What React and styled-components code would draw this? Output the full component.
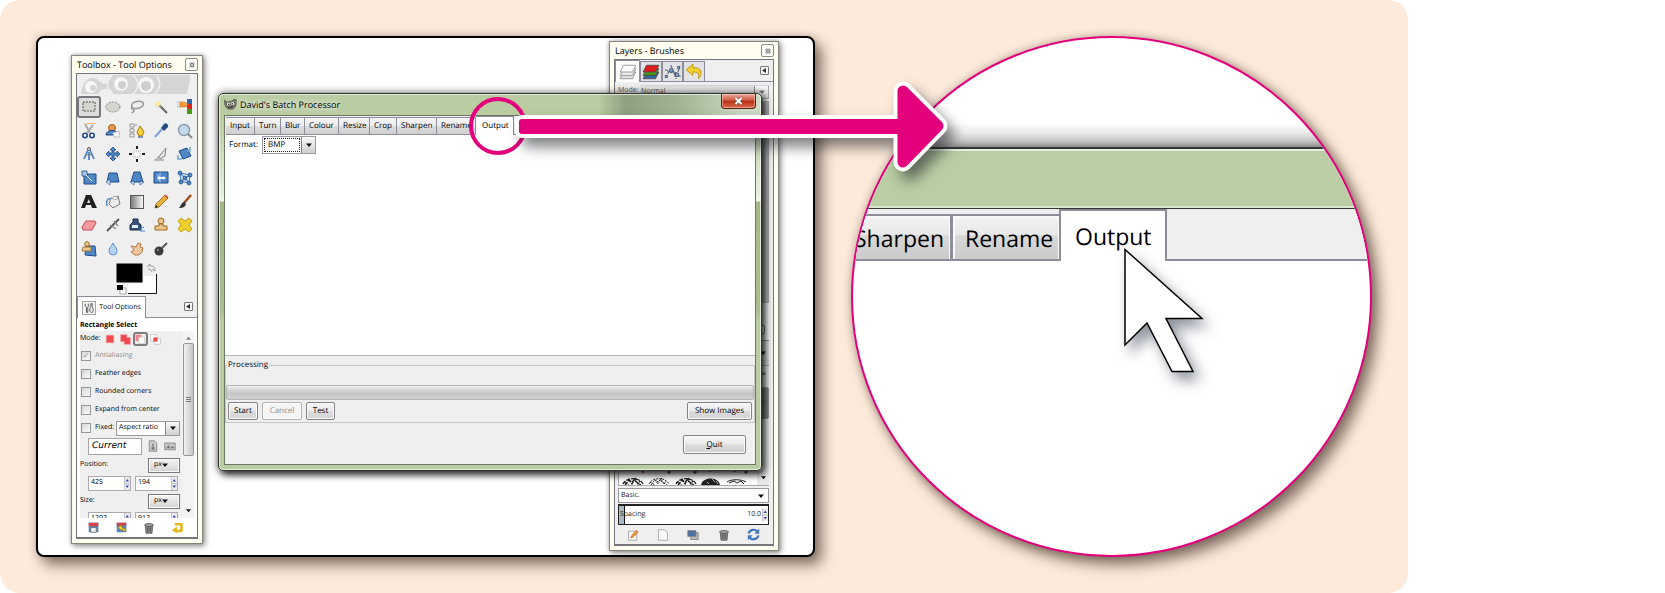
import React from "react";
import styled, { createGlobalStyle } from "styled-components";

const GlobalStyle = createGlobalStyle`
  *, *::before, *::after { box-sizing: border-box; }
  body {
    margin: 0;
    background: #fff;
    font-family: "Open Sans", "Noto Sans", sans-serif;
    font-size: 8px;
    line-height: 12px;
    color: #000;
    text-rendering: geometricPrecision;
  }
  button, input, select { font: inherit; color: inherit; margin: 0; padding: 0; border-radius: 0; text-rendering: inherit; }
  svg { display: block; flex: none; }
`;

/* ---------- page ---------- */

const Card = styled.main`
  position: relative;
  display: flex;
  gap: 36px;
  width: 100%;
  max-width: 1408px;
  padding: 36px;
  border-radius: 20px;
  background: #fdeada;
  overflow: hidden;
`;

const Desktop = styled.section`
  position: relative;
  flex: 1;
  min-width: 0;
  border: 2px solid #000;
  border-radius: 8px;
  background: #fff;
  box-shadow: 7px 8px 14px rgba(60, 42, 32, 0.6), 0 0 8px rgba(60, 42, 32, 0.25);
`;

/* ---------- dock windows ---------- */

const DockWindow = styled.section`
  position: absolute;
  display: flex;
  flex-direction: column;
  left: ${(p) => p.$left}px;
  top: ${(p) => p.$top}px;
  width: ${(p) => p.$width}px;
  height: ${(p) => p.$height}px;
  padding: 0 4px 4px;
  border: 1px solid #85857c;
  background: #fffdf0;
  box-shadow: 2px 2px 6px rgba(0, 0, 0, 0.4), 0 0 4px rgba(0, 0, 0, 0.25);
`;

const DockTitle = styled.header`
  display: flex;
  align-items: center;
  justify-content: space-between;
  flex: none;
  height: 17px;
  padding-left: 1px;
  h2 { margin: 0; font-size: 9px; font-weight: 400; white-space: nowrap; }
`;

const DockClose = styled.button`
  display: grid;
  place-items: center;
  width: 13px;
  height: 13px;
  border: 1px solid #8a8a8a;
  border-radius: 2px;
  background: #fffef8;
`;

const DockBody = styled.div`
  display: flex;
  flex-direction: column;
  flex: 1;
  min-height: 0;
  border: 1px solid #75757f;
  border-bottom-width: 2px;
  background: #efefef;
`;

const ToolGrid = styled.div`
  display: grid;
  flex: none;
  grid-template-columns: repeat(5, 1fr);
  grid-template-rows: repeat(7, 1fr);
  height: 166px;
`;

const ToolButton = styled.button`
  display: grid;
  place-items: center;
  margin: 1px 0;
  border: ${(p) => (p.$active ? "2px solid #77777b" : "0")};
  border-radius: 3px;
  background: ${(p) => (p.$active ? "#dedede" : "transparent")};
`;

const ColourArea = styled.div`
  display: flex;
  justify-content: center;
  flex: none;
  height: 35px;
  padding-top: 2px;
`;

const TabStrip = styled.div`
  position: relative;
  display: flex;
  flex: none;
  align-items: stretch;
  height: 22px;
  border-bottom: 1px solid #8d8d9c;
`;

const DockTab = styled.button`
  display: flex;
  align-items: center;
  justify-content: center;
  gap: 3px;
  width: ${(p) => p.$width}px;
  border: 1px solid #8d8d9c;
  border-width: 1px 1px 0 1px;
  background: ${(p) => (p.$active ? "#fff" : "#e3e3e6")};
  margin-top: ${(p) => (p.$active ? 0 : 1)}px;
  margin-bottom: ${(p) => (p.$active ? -1 : 0)}px;
  font-size: 7px;
  white-space: nowrap;
`;

const TabIconFrame = styled.span`
  display: grid;
  place-items: center;
  width: 14px;
  height: 14px;
  border: 1px solid #a5a5a5;
  background: #f3f3f3;
`;

const MenuButton = styled.button`
  display: grid;
  place-items: center;
  align-self: center;
  width: 9px;
  height: 9px;
  margin: 0 4px 0 auto;
  border: 1px solid #777;
  border-radius: 1px;
  background: #f6f6f6;
`;

const OptionsPane = styled.div`
  display: flex;
  flex-direction: column;
  flex: 1;
  min-height: 0;
  padding: 3px 3px 0;
  background: #fff;
  font-size: 7px;
`;

const OptionsHeading = styled.h3`
  flex: none;
  margin: 0;
  font-size: 7px;
  font-weight: 700;
  line-height: 10px;
  color: #000;
  white-space: nowrap;
`;

const ScrollBox = styled.div`
  display: flex;
  flex: none;
  height: 187px;
  overflow: hidden;
  background: #efefef;
`;

const OptionList = styled.div`
  flex: 1;
  min-width: 0;
  padding-right: 2px;
`;

const Row = styled.div`
  display: flex;
  align-items: center;
  gap: ${(p) => p.$gap ?? 4}px;
  height: ${(p) => p.$height ?? 18}px;
  padding-left: ${(p) => p.$left ?? 0}px;
  white-space: nowrap;
`;

const CheckLabel = styled.label`
  display: flex;
  align-items: center;
  gap: 4px;
  color: ${(p) => (p.$muted ? "#8c8c8c" : "inherit")};
`;

const CheckBox = styled.input.attrs({ type: "checkbox" })`
  display: grid;
  place-items: center;
  appearance: none;
  width: 10px;
  height: 10px;
  border: 1px solid #94989c;
  background: linear-gradient(135deg, #d4d6d9, #fbfbfb);
  &:checked::before {
    content: "✓";
    font: 8px/8px "DejaVu Sans", sans-serif;
    color: #999;
  }
`;

const ModeButton = styled.button`
  display: grid;
  place-items: center;
  width: 15px;
  height: 14px;
  border: ${(p) => (p.$active ? "2px solid #7b7b80" : "0")};
  border-radius: 3px;
  background: ${(p) => (p.$active ? "#ededed" : "transparent")};
`;

const Combo = styled.span`
  display: flex;
  width: ${(p) => p.$width}px;
  height: ${(p) => p.$height}px;
  border: 1px solid #9a9a9e;
  background: #fff;
`;

const Select = styled.select`
  appearance: none;
  flex: 1;
  min-width: 0;
  padding: 0 0 0 ${(p) => p.$pad ?? 2}px;
  border: ${(p) => (p.$dotted ? "1px dotted #222" : "0")};
  margin: ${(p) => (p.$dotted ? "1px" : "0")};
  background: transparent;
  outline: 0;
`;

const ComboArrow = styled.span`
  display: grid;
  place-items: center;
  width: 14px;
  border-left: 1px solid #85858a;
  background: linear-gradient(#fafafa, #cfcfcf);
`;

const UnitSelect = styled.span`
  display: flex;
  align-items: center;
  width: 32px;
  height: 15px;
  margin-left: auto;
  padding-right: 11px;
  border: 1px solid #77777c;
  background: linear-gradient(#f4f4f4, #d2d2d2);
  box-shadow: inset 0 0 0 1px #fafafa;
  select { text-align: right; }
`;

const RatioInput = styled.input`
  width: 54px;
  height: 17px;
  padding: 0 3px;
  border: 1px solid #a3a3a8;
  background: #fff;
  font: italic 9px/12px "DejaVu Sans", sans-serif;
`;

const IconButton = styled.button`
  display: grid;
  place-items: center;
  width: ${(p) => p.$size ?? 14}px;
  height: ${(p) => p.$size ?? 14}px;
  border: 0;
  background: transparent;
`;

const SpinBox = styled.span`
  display: flex;
  width: 43px;
  height: 15px;
  border: 1px solid #ababb0;
  background: #fff;
  input {
    flex: 1;
    min-width: 0;
    padding: 0 0 0 2px;
    border: 0;
    background: transparent;
  }
`;

const Scroller = styled.div`
  display: flex;
  flex-direction: column;
  align-items: center;
  justify-content: space-between;
  flex: none;
  width: 12px;
  padding: ${(p) => p.$pad ?? "5px 0"};
  background: ${(p) => p.$bg ?? "#f3f3f3"};
`;

const Thumb = styled.div`
  display: grid;
  place-items: center;
  width: 11px;
  height: ${(p) => p.$height}px;
  margin: ${(p) => p.$margin};
  border: 1px solid #96969b;
  border-radius: 2px;
  background: ${(p) => p.$bg ?? "linear-gradient(90deg, #f2f2f2, #c4c4c7)"};
`;

const IconBar = styled.div`
  display: flex;
  align-items: center;
  justify-content: space-around;
  flex: 1;
  padding-right: ${(p) => p.$right ?? 0}px;
`;

/* ---------- layers window ---------- */

const LayersPane = styled.div`
  display: flex;
  flex-direction: column;
  flex: 1;
  min-height: 0;
  padding: 3px 4px 0 3px;
  font-size: 7px;
  color: #555;
`;

const PaneRow = styled.div`
  display: flex;
  justify-content: space-between;
  flex: none;
  height: ${(p) => p.$height}px;
  margin-bottom: ${(p) => p.$below ?? 0}px;
  border: ${(p) => (p.$framed ? "1px solid #a9a9ad" : "0")};
  background: ${(p) => p.$bg ?? "transparent"};
`;

const ModeCombo = styled(Combo)`
  border-color: #d8d8da #a9a9ad #a9a9ad #e6e6e6;
  background: #e6e6e6;
`;

const BrushShelf = styled.div`
  align-self: flex-end;
`;

const FullCombo = styled(Combo)`
  flex: none;
  width: 100%;
  color: #222;
  padding-right: 4px;
  align-items: center;
`;

const Spacing = styled.label`
  display: flex;
  align-items: center;
  flex: none;
  height: 21px;
  margin-top: 1px;
  border: 1px solid #222;
  border-top-width: 2px;
  background: linear-gradient(90deg, #a9b8c2 5px, #111 5px, #111 6px, #fff 6px);
  color: #222;
  padding-left: 1px;
  input { flex: 1; min-width: 0; border: 0; background: transparent; text-align: right; padding-right: 1px; }
`;

/* ---------- batch processor ---------- */

const BatchWindow = styled.section`
  position: absolute;
  display: flex;
  flex-direction: column;
  left: 180px;
  top: 55px;
  width: 544px;
  height: 378px;
  padding: 0 5px 5px;
  border: 1px solid #2f332c;
  border-radius: 5px;
  background:
    linear-gradient(90deg, transparent 70%, rgba(105, 125, 105, 0.55) 75%, rgba(130, 150, 130, 0.45) 85%, rgba(220, 228, 220, 0.6) 97%) top / 100% 21px no-repeat,
    linear-gradient(#b9cca2 0 24px, #eaf2e4 104px, #f2f7ee 107px, #a3b98a 108px, #a9be90 215px, #b9cca2 228px);
  box-shadow: inset 0 0 0 1px rgba(244, 250, 238, 0.75), 3px 4px 7px rgba(0, 0, 0, 0.75), 0 0 9px rgba(0, 0, 0, 0.55);
`;

const BatchTitle = styled.header`
  display: flex;
  align-items: center;
  flex: none;
  gap: 3px;
  height: 21px;
  h1 {
    margin: 0;
    font-size: 9px;
    font-weight: 400;
    white-space: nowrap;
    text-shadow: 0 0 5px #fff, 0 0 8px #fff;
  }
`;

const BatchClose = styled.button`
  display: grid;
  place-items: center;
  align-self: flex-start;
  width: 35px;
  height: 15px;
  margin-left: auto;
  border: 1px solid #5a2018;
  border-top: 0;
  border-radius: 0 0 4px 4px;
  background: linear-gradient(#e9a99b, #cf5a42 45%, #b92f14 50%, #d9694a);
  box-shadow: inset 0 0 0 1px rgba(255, 220, 210, 0.5);
`;

const Client = styled.div`
  display: flex;
  flex-direction: column;
  flex: 1;
  min-height: 0;
  border: 1px solid #6e7765;
  background: #efefef;
`;

const BatchTabs = styled.div`
  display: flex;
  align-items: flex-end;
  flex: none;
  height: 19px;
  padding-left: 1px;
  &::after { content: ""; flex: 1; border-bottom: 1px solid #8d8d9c; }
`;

const BatchTab = styled.button`
  flex: none;
  width: ${(p) => p.$width}px;
  height: ${(p) => (p.$active ? 19 : 18)}px;
  padding: 0 0 0 ${(p) => (p.$active ? 6 : 4)}px;
  overflow: hidden;
  text-align: left;
  white-space: nowrap;
  border: solid #8d8d9c;
  border-width: ${(p) => (p.$active ? "1px 1px 0 0" : "1px 1px 1px 0")};
  background: ${(p) => (p.$active ? "#fff" : "linear-gradient(#f5f5f5, #ececec 50%, #dcdcdc 52%, #d0d0d0)")};
`;

const BatchPage = styled.div`
  flex: 1;
  padding: 1px 4px;
  border-bottom: 1px solid #b4b4b4;
  background: #fff;
`;

const Processing = styled.fieldset`
  flex: none;
  min-width: 0;
  height: 64px;
  margin: 3px 0 0;
  padding: 14px 0 2px;
  border: 1px solid #c6c6c6;
  legend { padding: 0 1px; margin-left: 1px; }
`;

const ProgressTrack = styled.div`
  height: 15px;
  border: 1px solid #b5b5b5;
  border-radius: 2px;
  background: linear-gradient(#ededed, #cfcfcf 40%, #c6c6c6 60%, #d2d2d2);
`;

const ButtonRow = styled.div`
  display: flex;
  gap: 4px;
  padding: 2px 2px 0;
`;

const PushButton = styled.button`
  width: ${(p) => p.$width}px;
  height: ${(p) => p.$height ?? 18}px;
  margin-left: ${(p) => (p.$end ? "auto" : 0)};
  border: 1px solid #83838a;
  border-radius: 2px;
  background: linear-gradient(#f6f6f6, #ebebeb 48%, #dcdcdc 52%, #d2d2d2);
  box-shadow: inset 0 0 0 1px #fafafa;
  white-space: nowrap;
  &:disabled { color: #8b8b8b; border-color: #b5b5b8; background: #f5f5f5; }
`;

const BatchFooter = styled.footer`
  flex: none;
  display: flex;
  height: 41px;
  padding: 12px 9px 0 0;
`;

/* ---------- magnified view and annotations ---------- */

const Lens = styled.section`
  position: relative;
  display: flex;
  flex-direction: column;
  flex: none;
  width: 521px;
  height: 521px;
  border: 2px solid #e4007c;
  border-radius: 50%;
  background: #fff;
  box-shadow: 7px 8px 14px rgba(60, 42, 32, 0.6), 0 0 8px rgba(60, 42, 32, 0.3);
  overflow: hidden;
`;

const LensSky = styled.div`
  flex: none;
  height: 109px;
  background: linear-gradient(transparent, rgba(0, 0, 0, 0.08) 40%, rgba(0, 0, 0, 0.22) 75%, rgba(0, 0, 0, 0.45)) bottom / 100% 24px no-repeat;
`;

const LensTitle = styled.div`
  flex: none;
  height: 62px;
  border: solid #33362f;
  border-width: 2px 0 1px;
  background: #bacda4;
  box-shadow: inset 0 2px 0 #e6efdd, inset 0 -2px 0 #dbe6d0;
`;

const LensTabs = styled.div`
  display: flex;
  align-items: flex-end;
  flex: none;
  height: 52px;
  background: #efefef;
  &::after { content: ""; flex: 1; border-bottom: 2px solid #8b8d99; }
`;

const LensTab = styled.button`
  display: flex;
  align-items: center;
  flex: none;
  width: ${(p) => p.$width}px;
  height: ${(p) => (p.$active ? 52 : 47)}px;
  padding: 0 0 0 ${(p) => p.$pad}px;
  overflow: hidden;
  white-space: nowrap;
  font-size: 23px;
  line-height: 32px;
  border: solid #8b8d99;
  border-width: ${(p) => (p.$active ? "2px 2px 0 2px" : p.$divider ? "2px 3px 2px 0" : "2px 0 2px 0")};
  background: ${(p) => (p.$active ? "#fff" : "linear-gradient(#f3f3f3, #e8e8e8 44%, #d8d8d8 46%, #cbcbcb)")};
  box-shadow: ${(p) => (p.$active ? "none" : "inset 2px 2px 0 #fafafa, inset -1px 0 0 #fafafa")};
`;

const Pointer = styled.svg`
  position: absolute;
  left: 270px;
  top: 209px;
  filter: drop-shadow(6px 8px 7px rgba(30, 40, 60, 0.5));
`;

const Ring = styled.div`
  position: absolute;
  left: 469px;
  top: 97px;
  width: 58px;
  height: 58px;
  border: 4px solid #e4007c;
  border-radius: 50%;
`;

const Arrow = styled.svg`
  position: absolute;
  left: 510px;
  top: 75px;
  filter: drop-shadow(7px 9px 7px rgba(20, 25, 30, 0.55));
`;

/* ---------- drawings ---------- */

const B = "#4f86c6";
const D = "#204a87";

const toolIcons = {
  rectangle: <rect x="2" y="3" width="12" height="9" fill="#d3d7cf" stroke="#555" strokeDasharray="2 1" />,
  ellipse: <ellipse cx="8" cy="8" rx="7" ry="5" fill="#d3d7cf" stroke="#888" strokeDasharray="2 1" />,
  lasso: <><ellipse cx="8.500" cy="6" rx="6" ry="3.500" fill="none" stroke="#999" strokeWidth="1.600" transform="rotate(-12 8 6)" /><path d="M3 8c-2 3 3 2 2 4s-2 1-2 2" fill="none" stroke="#888" strokeWidth="1.200" /></>,
  wand: <><path d="M6 6l8 8" stroke="#666" strokeWidth="2" /><path d="M5 1v8M1 5h8M2 2l6 6M8 2L2 8" stroke="#f4e78a" strokeWidth=".7" /><circle cx="5" cy="5" r="2" fill="#f8ee9a" /></>,
  byColor: <><rect x="10" y="0" width="5" height="5" fill="#3465a4" /><rect x="10" y="5" width="5" height="5" fill="#d22" /><rect x="10" y="10" width="5" height="5" fill="#4a9a18" /><path d="M0 3h3v5H0z" fill="#eee" stroke="#999" strokeWidth=".5" /><path d="M3 3h4l4 2-2 3H3z" fill="#f39a3b" stroke="#c60" strokeWidth=".5" /></>,
  scissors: <><path d="M4 1l5 9M12 2L6 10" stroke="#aaa" strokeWidth="2" /><path d="M5 1c3-1 6 0 10-1" stroke="#f0b060" fill="none" /><circle cx="4" cy="12.500" r="2.200" fill="#fff" stroke={D} strokeWidth="1.600" /><circle cx="11" cy="12.500" r="2.200" fill="#fff" stroke={D} strokeWidth="1.600" /></>,
  foreground: <><circle cx="7" cy="5" r="3.5" fill="#e8964a" stroke="#a55a12" /><path d="M1 12c0-6 12-6 12 0z" fill={B} stroke={D} /><path d="M8 10l6-2 1 6H9z" fill="#fff" stroke="#bbb" /></>,
  paths: <><path d="M3 2v12M3 2h5" stroke="#888" strokeDasharray="2 1" /><g fill="#f4f4f4" stroke="#777" strokeWidth=".7"><rect x="1" y="1" width="4" height="3" /><rect x="1" y="6" width="4" height="3" /><rect x="1" y="11" width="4" height="3" /></g><path d="M11 3l4 6-2 4h-3L8 9z" fill="#f5d442" stroke="#a87c08" /><path d="M9 13h5v2H9z" fill="#7d92b5" /></>,
  picker: <><path d="M2 14l7-8" stroke="#7ba4d8" strokeWidth="2" /><path d="M8 5l3 3 4-4c1-2-2-5-4-3z" fill="#234a80" /></>,
  zoom: <><circle cx="7" cy="7" r="5.5" fill="#c3daf2" stroke="#8d9aa8" strokeWidth="1.4" /><path d="M11 11l4 4" stroke="#888" strokeWidth="2.2" /></>,
  measure: <><circle cx="8" cy="3" r="1.6" fill="#ccc" stroke="#666" /><path d="M7 4L3 13M9 4l4 9M8 6v8" stroke={B} strokeWidth="1.800" /><path d="M4 10c2-2 6-2 8 0" fill="none" stroke="#777" /></>,
  move: <path d="M8 1l3 3H9v3h3V5l3 3-3 3V9H9v3h2l-3 3-3-3h2V9H4v2L1 8l3-3v2h3V4H5z" fill={B} stroke={D} strokeWidth=".8" />,
  align: <><rect x="5" y="5" width="6" height="6" fill="#fff" stroke="#aaa" strokeDasharray="1 1" /><path d="M8 0v3M8 13v3M0 8h3M13 8h3" stroke="#222" strokeWidth="2" /></>,
  crop: <path d="M3 14L13 2l-1 8-5 3-2-3M1 14h10" fill="#ddd" stroke="#888" />,
  rotate: <><path d="M2 5l8-3 4 8-8 3z" fill={B} stroke={D} /><path d="M13 1v4h-3M1 9v4h4" fill="none" stroke="#78a4da" strokeWidth="1.6" /></>,
  scale: <><path d="M3 4h12v10H3z" fill={B} stroke={D} /><path d="M1 1h5v5H1z" fill="#a9c7ea" stroke={D} strokeWidth=".8" /><path d="M5 5l6 6" stroke="#fff" /></>,
  shear: <><path d="M4 3h8l2 9H2z" fill={B} stroke={D} /><path d="M1 12l4-3v6z" fill="#cfe0f5" stroke={D} strokeWidth=".6" /></>,
  perspective: <><path d="M5 2h6l3 10H2z" fill={B} stroke={D} /><path d="M1 12l4-1v4zM15 12l-4-1v4z" fill="#cfe0f5" stroke={D} strokeWidth=".6" /></>,
  flip: <><path d="M1 2h14v11H1z" fill={B} stroke={D} /><path d="M8 2L4 5v5l4 3z" fill="#7aa8de" /><path d="M4 8l3-2v1h3V6l3 2-3 2V9H7v1z" fill="#fff" /></>,
  cage: <><path d="M3 3l10 2-1 8-8-2zM3 3l5 5 4 5M4 12l4-4 5-3" fill="none" stroke={B} strokeWidth="1.2" />{[[3, 3], [13, 5], [8, 8], [4, 12], [12, 13]].map(([x, y]) => <circle key={x} cx={x} cy={y} r="2" fill={B} stroke={D} strokeWidth=".7" />)}</>,
  text: <path d="M0 14L5 1h5l6 13h-5l-1-3H5l-1 3zM6 9h3L8 5z" fill="#1d1f20" />,
  bucket: <><path d="M6 4l7-2 2 8-7 4-4-4z" fill="#ededed" stroke="#777" /><path d="M6 5C2 4 1 7 2 12" stroke="#5b8ac6" strokeWidth="1.600" /><ellipse cx="10" cy="4" rx="3" ry="1.4" fill="#fff" stroke="#888" strokeWidth=".6" /></>,
  gradient: <rect x="1.500" y="1.500" width="13" height="13" fill="url(#blend)" stroke="#555" />,
  pencil: <><path d="M2 14l1-4 9-9 3 3-9 9z" fill="#e8b23a" stroke="#8a5a0a" strokeWidth=".8" /><path d="M2 14l1-3 2 2z" fill="#222" /><path d="M12 1l3 3" stroke="#c44" strokeWidth="1.6" /></>,
  brush: <><path d="M7 9L14 1" stroke="#9a4c1c" strokeWidth="2.4" /><path d="M7 8l2 2c-1 4-5 4-7 4 2-2 2-5 5-6z" fill="#333" /></>,
  eraser: <path d="M1 10L5 4h9l1 2-4 7H2z" fill="#f29a9d" stroke="#c74a50" />,
  airbrush: <><path d="M2 14L14 2" stroke="#555" strokeWidth="1.8" /><path d="M5 8l6 4M9 4l4 5" stroke="#888" strokeWidth="1.4" /></>,
  ink: <><path d="M4 2h5v3l3 3v5H1V8l3-3z" fill="#38557d" stroke="#1d2c44" /><rect x="3" y="8" width="6" height="3" fill="#e2e8f0" /><path d="M11 12l4-2M11 14h5" stroke={B} /></>,
  clone: <><circle cx="8" cy="4" r="3" fill="#edc58c" stroke="#9a6a24" /><path d="M6 7h4v2h4v4H2V9h4z" fill="#edc58c" stroke="#9a6a24" /></>,
  heal: <path d="M4 1l4 3 4-3 3 3-3 4 3 4-3 3-4-3-4 3-3-3 3-4-3-4z" fill="#edcf2c" stroke="#c4a414" />,
  perspClone: <><path d="M5 5h9l1 10-11-1z" fill={B} stroke={D} /><circle cx="6" cy="3" r="2.300" fill="#edc58c" stroke="#9a6a24" /><path d="M2 6h8v4H1z" fill="#edc58c" stroke="#9a6a24" strokeWidth=".8" /></>,
  blur: <path d="M8 2c2 4 4 5 4 8a4 4 0 0 1-8 0c0-3 2-4 4-8z" fill="#b5d4f2" stroke="#5a8cc4" />,
  smudge: <path d="M2 5l5 1 2-4 3 1-1 3 3 1-1 4-3 3H6L2 11l3-2z" fill="#f1c69c" stroke="#b57a46" />,
  dodge: <><circle cx="6" cy="10" r="4.500" fill="#3a3d40" /><path d="M9 7l5-5" stroke="#555" strokeWidth="2" /><circle cx="5" cy="9" r="1" fill="#999" /></>,
};

const Icon = ({ size = 16, children }) => (
  <svg width={size} height={size} viewBox="0 0 16 16" fill="none" aria-hidden="true">{children}</svg>
);

const Down = ({ size = 6, color = "#111" }) => (
  <svg width={size} height={size} viewBox="0 0 6 6" aria-hidden="true"><path d="M0 1.500h6L3 5z" fill={color} /></svg>
);
const Up = ({ size = 6, color = "#777" }) => (
  <svg width={size} height={size} viewBox="0 0 6 6" aria-hidden="true"><path d="M0 4.500h6L3 1z" fill={color} /></svg>
);
const Grip = () => (
  <svg width="5" height="6" aria-hidden="true"><path d="M0 .5h5M0 2.500h5M0 4.500h5" stroke="#777" /></svg>
);
const CrossBox = () => (
  <svg width="6" height="6" viewBox="0 0 6 6" aria-hidden="true">
    <path d="M1 1l4 4M5 1L1 5" stroke="#666" strokeWidth="2.200" /><path d="M1 1l4 4M5 1L1 5" stroke="#eee" strokeWidth=".7" />
  </svg>
);
const MenuTriangle = () => (
  <svg width="5" height="5" viewBox="0 0 5 5" aria-hidden="true"><path d="M4 0v5L0 2.500z" fill="#333" /></svg>
);
const SpinArrows = () => (
  <svg width="6" height="100%" viewBox="0 0 6 13" aria-hidden="true">
    <rect width="6" height="13" fill="#e9e9ee" />
    <path d="M0 6.500h6M.5 0v13" stroke="#b5b5bb" strokeWidth=".7" />
    <path d="M1.500 4.500h3.500L3.200 2zM1.500 8.500h3.500L3.200 11z" fill="#3d4fa8" />
  </svg>
);

const Banner = () => (
  <svg width="110" height="20" viewBox="0 0 110 20" aria-hidden="true">
    <path d="M0 19C1 9 5 3 12 3c6 0 7 6 12 6 4 0 5-6 8-9h77c0 8-2 14-3 19z" fill="#d5d5d5" />
    <path d="M17 19c3-6 9-7 15-2v2z" fill="#efefef" />
    <path d="M31 1c-6 5-6 12 0 17M52 0c6 6 6 13 0 19M76 1c4 6 4 12-2 18" fill="none" stroke="#efefef" strokeWidth="1.500" />
    <circle cx="10" cy="12" r="6" fill="#f6f6f6" /><circle cx="12" cy="13" r="3" fill="#d5d5d5" />
    <circle cx="40" cy="9" r="7" fill="#f6f6f6" /><circle cx="41" cy="10" r="4" fill="#cfcfcf" />
    <circle cx="65" cy="10" r="8" fill="#f6f6f6" /><circle cx="65" cy="11" r="5" fill="#cfcfcf" />
  </svg>
);

const ColourSwatches = () => (
  <svg width="42" height="32" viewBox="0 0 42 32" role="img" aria-label="Foreground and background colours">
    <path d="M12 13h29v17H12z" fill="#fff" />
    <path d="M12 30.500h28.500V11" fill="none" stroke="#111" />
    <rect x="0" y="0" width="27" height="20" fill="#000" stroke="#efefef" strokeWidth="1" />
    <rect x="4" y="25" width="6" height="6" fill="#fff" stroke="#999" strokeWidth=".8" />
    <rect x="1" y="22" width="6" height="5" fill="#000" />
    <path d="M31 4l3-3v2c4 0 5 1 5 5M39 8l-3-2M32 6c3 0 3 1 4 3" fill="none" stroke="#999" />
  </svg>
);

const Wilber = () => (
  <svg width="13" height="11" viewBox="0 0 13 11" aria-hidden="true">
    <path d="M0 1l3 2c3-1 4 0 6-2l3-1c1 5 0 8-3 10-4 1-7 0-8-4z" fill="#77776f" stroke="#44443f" strokeWidth=".6" />
    <circle cx="4.500" cy="5" r="1.500" fill="#fff" /><circle cx="8.500" cy="4.500" r="1.500" fill="#fff" />
    <circle cx="4.800" cy="5.200" r=".7" fill="#000" /><circle cx="8.300" cy="4.700" r=".7" fill="#000" />
    <path d="M4 8c2 1 4 0 5-1" stroke="#222" fill="none" />
  </svg>
);

const LayerStack = ({ colours, stroke }) => (
  <Icon size={18}>
    {colours.map((c, i) => (
      <path key={c + i} d={`M4 ${8 - i * 3}h11l-3 6H1z`} fill={c} stroke={stroke} strokeWidth=".7" />
    ))}
  </Icon>
);

const Trash = () => (
  <Icon size={12}><path d="M3 4h10l-1 11H4z" fill="#8a8a8a" stroke="#4c4c4c" /><ellipse cx="8" cy="4" rx="6" ry="2" fill="#a5a5a5" stroke="#4c4c4c" /><path d="M6 7v6M8 7v6M10 7v6" stroke="#555" /></Icon>
);

const Brushes = () => (
  <svg width="138" height="15" viewBox="0 0 138 15" aria-hidden="true">
    <path d="M22 1l3-2v5z" fill="#d33" />
    <path d="M48 2h4M50 0v4M74 2h4M76 0v4M125 2h4M127 0v4M90 1h2M114 1h3" stroke="#222" />
    {[14, 40, 67].map((x, i) => (
      <path
        key={x}
        d={`M${x - 10} 14c2-6 16-8 20 0M${x - 8} 15l4-5 3 4 3-5 3 5 2-3M${x - 5} 9l4 3 4-4M${x - 9} 12l5 3M${x + 2} 11l6 4`}
        stroke="#1c1c1c"
        fill="none"
        strokeWidth={i === 1 ? 0.9 : 1.3}
        strokeDasharray={i === 1 ? "2 1" : "4 1"}
      />
    ))}
    <path d="M82 15c1-8 17-9 19 0z" fill="#222" />
    <path d="M93 9l3 3M97 11l2 3M88 12l2 2" stroke="#aaa" />
    <path d="M108 12c4-3 14-3 19 0M110 13l5-2 3 2 4-2 3 3" stroke="#222" fill="none" />
  </svg>
);

/* ---------- composed parts ---------- */

const ArrowSelect = ({ id, label, value, width, height, dotted }) => (
  <Combo $width={width} $height={height}>
    <Select id={id} aria-label={label} defaultValue={value} $dotted={dotted} $pad={dotted ? 3 : 2}>
      <option>{value}</option>
    </Select>
    <ComboArrow><Down /></ComboArrow>
  </Combo>
);

const Unit = ({ label }) => (
  <UnitSelect>
    <Select aria-label={label} defaultValue="px"><option>px</option></Select>
    <Down />
  </UnitSelect>
);

const Spin = ({ label, value }) => (
  <SpinBox>
    <input aria-label={label} defaultValue={value} />
    <SpinArrows />
  </SpinBox>
);

const Check = ({ children, ...rest }) => (
  <CheckLabel $muted={rest.disabled}><CheckBox {...rest} />{children}</CheckLabel>
);

function Toolbox() {
  return (
    <DockWindow $left={33} $top={17} $width={132} $height={489}>
      <DockTitle>
        <h2>Toolbox - Tool Options</h2>
        <DockClose aria-label="Close toolbox"><CrossBox /></DockClose>
      </DockTitle>
      <DockBody>
        <Row $height={21} $left={4}><Banner /></Row>
        <ToolGrid>
          {Object.entries(toolIcons).map(([name, art]) => (
            <ToolButton key={name} aria-label={name} $active={name === "rectangle"}><Icon>{art}</Icon></ToolButton>
          ))}
        </ToolGrid>
        <ColourArea><ColourSwatches /></ColourArea>
        <TabStrip role="tablist">
          <DockTab role="tab" aria-selected="true" $active $width={69}>
            <TabIconFrame>
              <Icon size={10}><path d="M2 1v4l2 2v8h2V7l1-2V1M11 6c-2 2-3 9 1 9s3-7 1-9V1h-2z" stroke="#555" strokeWidth="1.500" /></Icon>
            </TabIconFrame>
            Tool Options
          </DockTab>
          <MenuButton aria-label="Tab menu"><MenuTriangle /></MenuButton>
        </TabStrip>
        <OptionsPane>
          <OptionsHeading>Rectangle Select</OptionsHeading>
          <ScrollBox>
            <OptionList>
              <Row $height={16} $gap={0}>
                <span>Mode:</span>
                <Row $height={16} $left={2} $gap={0}>
                  <ModeButton aria-label="Replace"><Icon size={10}><path d="M2 2h12v12H2z" fill="#ee4b50" stroke="#f5989a" /></Icon></ModeButton>
                  <ModeButton aria-label="Add"><Icon size={11}><path d="M1 1h9v4h5v10H6v-4H1z" fill="#e94b50" stroke="#f5989a" /></Icon></ModeButton>
                  <ModeButton aria-label="Subtract" $active><Icon size={10}><path d="M1 1h9v4H6v6H1z" fill="#ef8286" /><path d="M6 5h9v10H6z" fill="#fff" stroke="#bbb" /></Icon></ModeButton>
                  <ModeButton aria-label="Intersect"><Icon size={11}><path d="M1 1h9v9H1zM6 6h9v9H6z" fill="#fff" stroke="#bbb" /><path d="M5 5h6v6H5z" fill="#e94b50" /></Icon></ModeButton>
                </Row>
              </Row>
              <Row $left={1}><Check defaultChecked disabled>Antialiasing</Check></Row>
              <Row $left={1}><Check>Feather edges</Check></Row>
              <Row $left={1}><Check>Rounded corners</Check></Row>
              <Row $left={1}><Check>Expand from center</Check></Row>
              <Row $left={1} $gap={2}>
                <Check>Fixed:</Check>
                <ArrowSelect label="Fixed constraint" value="Aspect ratio" width={64} height={15} />
              </Row>
              <Row $left={8} $gap={5}>
                <RatioInput aria-label="Ratio" defaultValue="Current" />
                <IconButton $size={12} aria-label="Portrait"><Icon size={12}><path d="M3 1h7l3 3v11H3z" fill="#ccc" stroke="#777" /><path d="M6 13V9h4v4M7 5h2v3H7z" fill="#777" /></Icon></IconButton>
                <IconButton $size={12} aria-label="Landscape"><Icon size={12}><path d="M1 4h14v9H1z" fill="#c6c6c6" stroke="#777" /><path d="M3 11l3-4 3 4 2-3 3 3z" fill="#777" /></Icon></IconButton>
              </Row>
              <Row $height={20}><span>Position:</span><Unit label="Position unit" /></Row>
              <Row $height={16} $left={8}><Spin label="X" value="425" /><Spin label="Y" value="194" /></Row>
              <Row $height={20}><span>Size:</span><Unit label="Size unit" /></Row>
              <Row $height={16} $left={8}><Spin label="Width" value="1202" /><Spin label="Height" value="912" /></Row>
            </OptionList>
            <Scroller>
              <Up size={5} />
              <Thumb $height={113} $margin="0 0 50px"><Grip /></Thumb>
              <Down size={5} />
            </Scroller>
          </ScrollBox>
          <IconBar $right={3}>
            <IconButton aria-label="Save options"><Icon size={11}><path d="M1 1h14v14H1z" fill="#4f86c6" /><path d="M1 1h14v5H1z" fill="#d8434a" /><path d="M4 8h8v7H4z" fill="#eee" stroke="#666" /></Icon></IconButton>
            <IconButton aria-label="Restore options"><Icon size={11}><path d="M1 1h14v14H1z" fill="#4f86c6" /><path d="M1 1h14v4H1z" fill="#d8434a" /><path d="M3 8l5-4v3l6 4-2 3-4-4v3z" fill="#f2cf2c" stroke="#9a7a06" /></Icon></IconButton>
            <IconButton aria-label="Delete options"><Trash /></IconButton>
            <IconButton aria-label="Reset options"><Icon size={12}><path d="M5 3h9v9H7" stroke="#e2b71e" strokeWidth="3.500" strokeLinejoin="round" /><path d="M1 11l7-5v9z" fill="#e2b71e" /></Icon></IconButton>
          </IconBar>
        </OptionsPane>
      </DockBody>
    </DockWindow>
  );
}

function LayersDock() {
  return (
    <DockWindow $left={571} $top={3} $width={170} $height={510}>
      <DockTitle>
        <h2>Layers - Brushes</h2>
        <DockClose aria-label="Close layers"><CrossBox /></DockClose>
      </DockTitle>
      <DockBody>
        <TabStrip role="tablist">
          <DockTab role="tab" aria-label="Layers" aria-selected="true" $active $width={25}><LayerStack colours={["#ddd", "#eee", "#fafafa"]} stroke="#888" /></DockTab>
          <DockTab role="tab" aria-label="Channels" $width={22}><LayerStack colours={["#3465a4", "#4a9a18", "#e01b1b"]} stroke="#444" /></DockTab>
          <DockTab role="tab" aria-label="Paths" $width={21}><Icon size={18}><path d="M1 13C4 11 4 4 8 7s4 3 6-4M1 6l14 6M6 2l5 12" stroke="#567" strokeDasharray="3 1" /><path d="M5 5h3v3H5zM10 9h3v3h-3zM1 11h2v2H1zM12 3h2v2h-2z" fill="#79a0d0" stroke="#234" strokeWidth=".5" /></Icon></DockTab>
          <DockTab role="tab" aria-label="History" $width={22}><Icon size={18}><path d="M1 6l6-5v3c8 0 9 5 5 10 1-5-1-6-5-6v3z" fill="#f2cf2c" stroke="#b8980c" strokeWidth=".8" /></Icon></DockTab>
          <MenuButton aria-label="Dock menu"><MenuTriangle /></MenuButton>
        </TabStrip>
        <LayersPane>
          <PaneRow $height={14} $below={2}>
            <label htmlFor="mode">Mode:</label>
            <ModeCombo $width={129} $height={14}>
              <Select id="mode" defaultValue="Normal" $pad={0}><option>Normal</option></Select>
              <ComboArrow><Down color="#777" /></ComboArrow>
            </ModeCombo>
          </PaneRow>
          <PaneRow $height={202} $framed $bg="#b9b9bd" />
          <PaneRow $height={16} />
          <TabStrip>
            <MenuButton aria-label="Brushes menu"><MenuTriangle /></MenuButton>
          </TabStrip>
          <PaneRow $height={24} $bg="#cfcfd2">
            <span />
            <Scroller $bg="#dedee0" $pad="9px 0"><Down /></Scroller>
          </PaneRow>
          <PaneRow $height={121} $below={2} $framed $bg="#fff">
            <BrushShelf><Brushes /></BrushShelf>
            <Scroller $bg="#e9e9eb">
              <Up size={5} />
              <Thumb $height={32} $margin="0 0 46px" $bg="#85858a"><Grip /></Thumb>
              <Down size={5} />
            </Scroller>
          </PaneRow>
          <FullCombo $height={15}>
            <Select aria-label="Brush set" defaultValue="Basic."><option>Basic.</option></Select>
            <Down />
          </FullCombo>
          <Spacing>
            Spacing
            <input defaultValue="10.0" />
            <SpinArrows />
          </Spacing>
          <IconBar>
            <IconButton aria-label="Edit brush"><Icon size={12}><path d="M2 3h11v12H2z" fill="#f6f6f6" stroke="#999" /><path d="M5 12l1-3 6-7 3 2-7 7z" fill="#ef9a2c" stroke="#a04c10" strokeWidth=".7" /></Icon></IconButton>
            <IconButton aria-label="New brush"><Icon size={12}><path d="M2 1h8l4 4v10H2z" fill="#fafafa" stroke="#999" /></Icon></IconButton>
            <IconButton aria-label="Duplicate brush"><Icon size={12}><path d="M5 5h10v9H5z" fill="#bbb" stroke="#777" /><path d="M1 2h11v8H1z" fill="#4d6f9e" stroke="#888" /></Icon></IconButton>
            <IconButton aria-label="Delete brush"><Trash /></IconButton>
            <IconButton aria-label="Refresh brushes"><Icon size={13}><path d="M2 7c1-6 9-6 11-2M14 9c-1 6-9 6-11 2" stroke="#3f77c0" strokeWidth="2.600" /><path d="M15 1v6H9zM1 15V9h6z" fill="#3f77c0" /></Icon></IconButton>
          </IconBar>
        </LayersPane>
      </DockBody>
    </DockWindow>
  );
}

const batchTabs = [["Input", 29], ["Turn", 26], ["Blur", 24], ["Colour", 34], ["Resize", 31], ["Crop", 27], ["Sharpen", 40], ["Rename", 39]];

function BatchProcessor() {
  return (
    <BatchWindow>
      <BatchTitle>
        <Wilber />
        <h1>David's Batch Processor</h1>
        <BatchClose aria-label="Close batch processor">
          <svg width="9" height="8" viewBox="0 0 9 8" aria-hidden="true"><path d="M1.500 1l6 6M7.500 1l-6 6" stroke="#555" strokeWidth="3" /><path d="M1.500 1l6 6M7.500 1l-6 6" stroke="#fff" strokeWidth="2" /></svg>
        </BatchClose>
      </BatchTitle>
      <Client>
        <BatchTabs role="tablist">
          {batchTabs.map(([name, width]) => <BatchTab key={name} role="tab" $width={width}>{name}</BatchTab>)}
          <BatchTab role="tab" aria-selected="true" $active $width={38}>Output</BatchTab>
        </BatchTabs>
        <BatchPage role="tabpanel">
          <Row>
            <label htmlFor="format">Format:</label>
            <ArrowSelect id="format" value="BMP" width={54} height={18} dotted />
          </Row>
        </BatchPage>
        <Processing>
          <legend>Processing</legend>
          <ProgressTrack role="progressbar" aria-label="Progress" />
          <ButtonRow>
            <PushButton $width={30}>Start</PushButton>
            <PushButton $width={40} disabled>Cancel</PushButton>
            <PushButton $width={29}>Test</PushButton>
            <PushButton $width={65} $end>Show Images</PushButton>
          </ButtonRow>
        </Processing>
        <BatchFooter>
          <PushButton $width={63} $height={19} $end><u>Q</u>uit</PushButton>
        </BatchFooter>
      </Client>
    </BatchWindow>
  );
}

const head = "M25 16L60 51L25 87Z";

export default function App() {
  return (
    <>
      <GlobalStyle />
      <Card>
        <Desktop>
          <Toolbox />
          <LayersDock />
          <BatchProcessor />
        </Desktop>
        <Lens>
          <LensSky />
          <LensTitle />
          <LensTabs role="tablist">
            <LensTab role="tab" $width={100} $pad={1} $divider>Sharpen</LensTab>
            <LensTab role="tab" $width={106} $pad={12}>Rename</LensTab>
            <LensTab role="tab" aria-selected="true" $active $width={108} $pad={14}>Output</LensTab>
          </LensTabs>
          <Pointer width="100" height="140" aria-hidden="true">
            <path d="M2 2.500L79 71.500H43L70 124.500H49L24 76L2 98Z" fill="#fff" stroke="#000" strokeWidth="1.500" />
          </Pointer>
        </Lens>
        <Ring />
        <Arrow width="460" height="115" aria-hidden="true">
          <defs>
            <linearGradient id="blend"><stop offset="0" stopColor="#777" /><stop offset="1" stopColor="#fff" /></linearGradient>
          </defs>
          <g strokeLinejoin="round" stroke="#fff" fill="#fff">
            <rect x="9" y="44" width="390" height="15" rx="3" strokeWidth="8" />
            <path d={head} transform="translate(368 0)" strokeWidth="19" />
          </g>
          <g strokeLinejoin="round" stroke="#e4007c" fill="#e4007c">
            <rect x="9" y="44" width="390" height="15" rx="3" strokeWidth="0" />
            <path d={head} transform="translate(368 0)" strokeWidth="11" />
          </g>
        </Arrow>
      </Card>
    </>
  );
}
